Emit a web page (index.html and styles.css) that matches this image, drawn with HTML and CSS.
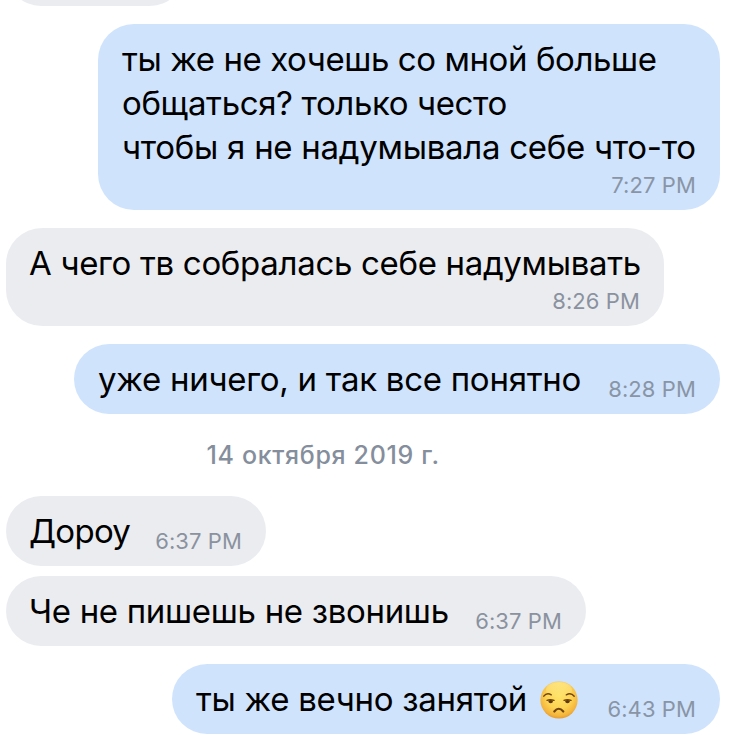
FILE: index.html
```html
<!DOCTYPE html>
<html lang="ru">
<head>
<meta charset="utf-8">
<title>Чат</title>
<link rel="stylesheet" href="styles.css">
</head>
<body>
<main class="chat">
  <div class="bubble in clipped"></div>
  <div class="bubble out stacked w1">
    <p class="text"><span class="l1">ты же не хочешь со мной больше</span><br><span class="l2">общаться? только често</span><br><span class="l3">чтобы я не надумывала себе что-то</span></p>
    <time class="time">7:27 PM</time>
  </div>
  <div class="bubble in stacked w2">
    <p class="text"><span class="l4">А чего тв собралась себе надумывать</span></p>
    <time class="time">8:26 PM</time>
  </div>
  <div class="bubble out w3">
    <p class="text"><span class="l5">уже ничего, и так все понятно</span></p>
    <time class="time">8:28 PM</time>
  </div>
  <div class="date"><span>14 октября 2019 г.</span></div>
  <div class="bubble in w4">
    <p class="text"><span class="l6">Дороу</span></p>
    <time class="time">6:37 PM</time>
  </div>
  <div class="bubble in next w5">
    <p class="text"><span class="l7">Че не пишешь не звонишь</span></p>
    <time class="time">6:37 PM</time>
  </div>
  <div class="bubble out w6">
    <p class="text"><span class="l8">ты же вечно занятой</span></p>
    <svg class="emoji" viewBox="0 0 38 38" role="img" aria-label="Недовольное лицо">
      <defs>
        <radialGradient id="face" cx="50%" cy="40%" r="62%">
          <stop offset="0" stop-color="#ffe366"/>
          <stop offset=".55" stop-color="#fdd352"/>
          <stop offset=".85" stop-color="#f4b43c"/>
          <stop offset="1" stop-color="#e2942a"/>
        </radialGradient>
        <linearGradient id="shine" x1="0" y1="0" x2="0" y2="1">
          <stop offset="0" stop-color="#fff6b0" stop-opacity=".5"/>
          <stop offset="1" stop-color="#fff6b0" stop-opacity="0"/>
        </linearGradient>
      </defs>
      <circle cx="19" cy="19" r="18.6" fill="url(#face)"/>
      <ellipse cx="19" cy="9" rx="13" ry="8" fill="url(#shine)"/>
      <g fill="none" stroke="#70430f" stroke-linecap="round">
        <path d="M3.8 15.2Q6.7 11.2 11.3 13.8" stroke-width="1.4"/>
        <path d="M26.3 13.8Q31 11.2 34.2 15.2" stroke-width="1.4"/>
        <path d="M7 19.3Q10.5 18.1 14 19.4" stroke-width="1.4"/>
        <path d="M24 19.3Q27.5 18.1 31 19.4" stroke-width="1.4"/>
        <path d="M14.3 30.5Q18.7 25 23.3 30.5" stroke-width="2.2"/>
      </g>
      <ellipse cx="10.7" cy="20.6" rx="2.2" ry="1.7" fill="#5d3710"/>
      <ellipse cx="27.5" cy="20.6" rx="2.2" ry="1.7" fill="#5d3710"/>
    </svg>
    <time class="time">6:43 PM</time>
  </div>
</main>
</body>
</html>
```
FILE: styles.css
```css
* { box-sizing: border-box; }
html, body { margin: 0; height: 735px; overflow: hidden; background: #fff; }
body { font-family: Inter, "Noto Sans", sans-serif; color: #000; }
.chat {
  display: flex;
  flex-direction: column;
  height: 735px;
  padding: 0 17px 0 6px;
  overflow: hidden;
}
.bubble {
  flex: none;
  display: flex;
  height: 70px;
  margin-top: 18px;
  padding: 13px 24px;
  border-radius: 36px;
  white-space: nowrap;
}
.in { align-self: flex-start; background: #ebecf0; padding-left: 23px; }
.out { align-self: flex-end; background: #cfe3fd; }
.next { margin-top: 10px; }
.clipped { width: 179px; margin-top: -64px; }
.stacked { flex-direction: column; height: auto; padding-bottom: 9px; }
.text { margin: 0; font-size: 33px; line-height: 44px; }
.time {
  margin: 16px 0 0 auto;
  font-size: 22px;
  line-height: 32px;
  height: 32px;
  color: #8a929f;
  letter-spacing: 0.1px;
}
.stacked .time { margin: 0 0 0 auto; }
.out .time { color: #8995a5; }
.date {
  flex: none;
  margin-left: 200.5px;
  height: 82px;
  font-size: 25px;
  line-height: 82px;
  font-weight: 500;
  letter-spacing: 0.68px;
  color: #858e9c;
  white-space: nowrap;
}
.date + .bubble { margin-top: 0; }
.emoji { flex: none; width: 38px; height: 38px; margin: 4px 0 0 13px; }
.l1 { letter-spacing: -0.42px; }
.l2 { letter-spacing: -0.38px; }
.l3 { letter-spacing: -0.28px; }
.l4 { letter-spacing: -0.32px; }
.l5 { letter-spacing: -0.27px; }
.l6 { letter-spacing: -0.7px; }
.l7 { letter-spacing: -0.32px; }
.l8 { letter-spacing: -0.3px; }
.w1 { width: 622px; }
.w2 { width: 658px; }
.w3 { width: 646px; }
.w4 { width: 260px; }
.w5 { width: 580px; }
.w6 { width: 548px; }
```
